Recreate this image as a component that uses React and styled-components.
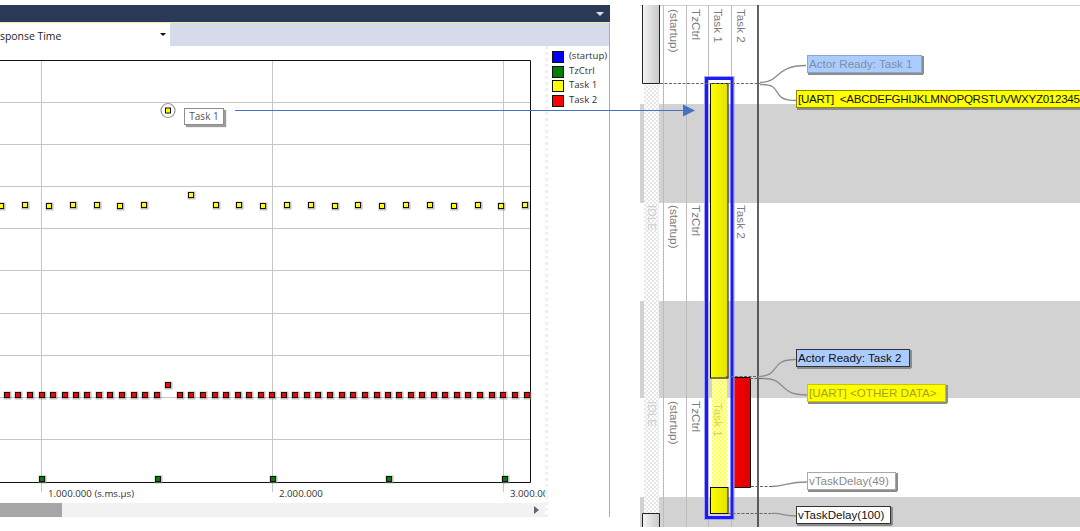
import React from "react";
import styled, { createGlobalStyle } from "styled-components";

const GlobalStyle = createGlobalStyle`
  html, body { margin: 0; padding: 0; background: #fff; }
  #root { width: 1080px; height: 531px; overflow: hidden; }
`;

const Page = styled.div`
  position: relative;
  width: 1080px;
  height: 531px;
  padding-top: 5px;
  box-sizing: border-box;
  display: flex;
  gap: 30px;
  overflow: hidden;
  background: #fff;
`;

const ChartPanel = styled.section`
  width: 610px;
  height: 512px;
  display: flex;
  flex-direction: column;
  flex: none;
`;

const TitleBar = styled.div`
  height: 17px;
  flex: none;
  background: #2a3a56;
  border-bottom: 1px solid #f1e9a2;
  display: flex;
  align-items: center;
  justify-content: flex-end;
  padding-right: 6px;
`;

const Chevron = styled.span`
  width: 0;
  height: 0;
  border-left: 4px solid transparent;
  border-right: 4px solid transparent;
  border-top: 4px solid #d8dde8;
`;

const PanelBody = styled.div`
  flex: 1;
  display: flex;
  flex-direction: column;
  border-right: 1px solid #a2aac6;
  min-height: 0;
`;

const Toolbar = styled.div`
  height: 23px;
  flex: none;
  background: #d6dbe9;
  display: flex;
`;

const Combo = styled.div`
  width: 170px;
  background: #fff;
  display: flex;
  align-items: center;
  justify-content: space-between;
  padding: 2px 4px 0 0;
  box-sizing: border-box;
  font: 10.4px "Open Sans", "Noto Sans", sans-serif;
  color: #222;
  white-space: nowrap;
`;

const ComboArrow = styled.span`
  width: 0;
  height: 0;
  margin-top: -2px;
  border-left: 3px solid transparent;
  border-right: 3px solid transparent;
  border-top: 3px solid #111;
`;

const ChartRow = styled.div`
  flex: 1;
  display: flex;
  min-height: 0;
`;

const ChartColumn = styled.div`
  width: 545px;
  flex: none;
  display: flex;
  flex-direction: column;
`;

const ChartArea = styled.div`
  position: relative;
  height: 457px;
  flex: none;
  svg { display: block; }
`;

const Tip = styled.div`
  position: absolute;
  left: 184px;
  top: 62px;
  width: 40px;
  height: 17px;
  box-sizing: border-box;
  background: #fff;
  border: 1px solid #8f8f8f;
  box-shadow: 2px 2px 1px #9c9c9c;
  font: 10px "Open Sans", "Noto Sans", sans-serif;
  line-height: 15px;
  text-align: center;
  color: #555;
`;

const Scrollbar = styled.div`
  height: 14px;
  flex: none;
  background: #f2f2f2;
  display: flex;
  align-items: center;
  justify-content: space-between;
  padding-right: 6px;
  box-sizing: border-box;
`;

const ScrollThumb = styled.span`
  width: 62px;
  height: 100%;
  background: #a6a6a6;
`;

const ScrollArrow = styled.span`
  width: 0;
  height: 0;
  border-top: 4px solid transparent;
  border-bottom: 4px solid transparent;
  border-left: 5px solid #626870;
`;

const LegendColumn = styled.aside`
  flex: 1;
  border-left: 3px dotted #f0f0f0;
  padding: 4px 0 0 4px;
  display: grid;
  grid-auto-rows: 14.6px;
  align-content: start;
`;

const LegendItem = styled.div`
  display: flex;
  align-items: center;
  gap: 5px;
`;

const LegendLabel = styled.span`
  font: 9.6px "Open Sans", "Noto Sans", sans-serif;
  line-height: 12px;
  margin-top: -2px;
  color: #333;
`;

const Swatch = styled.span`
  width: 12px;
  height: 12px;
  box-sizing: border-box;
  border: 1px solid #111;
  background: ${(p) => p.$color};
`;

const TracePanel = styled.section`
  position: relative;
  width: 440px;
  height: 522px;
  flex: none;
  svg { display: block; }
`;

const Callout = styled.div`
  position: absolute;
  left: ${(p) => p.$x}px;
  top: ${(p) => p.$y}px;
  width: ${(p) => p.$w}px;
  height: ${(p) => p.$h}px;
  box-sizing: border-box;
  padding-left: 1px;
  background: ${(p) => p.$bg};
  color: ${(p) => p.$fg};
  border: 1px solid ${(p) => p.$edge};
  box-shadow: 1px 2px 0 #8c8c8c, 2px 1px 0 #8c8c8c;
  font: 11.6px "Liberation Sans", Arial, sans-serif;
  letter-spacing: ${(p) => p.$track || 0}px;
  line-height: ${(p) => p.$h - 2}px;
  white-space: pre;
  overflow: hidden;
`;

const ArrowOverlay = styled.svg`
  position: absolute;
  left: 0;
  top: 0;
  pointer-events: none;
`;

const AxisText = styled.text`
  font: 9.7px "Open Sans", "Noto Sans", sans-serif;
  fill: #333;
`;

const LaneText = styled.text`
  font: 11.7px "Liberation Sans", Arial, sans-serif;
  fill: ${(p) => p.$fill || "#7c7c7c"};
`;

const yellowXs = [1, 25, 49, 73, 97, 120, 144, 191, 216, 239, 263, 287, 311, 335, 358, 382, 406, 430, 454, 478, 501, 525];
const yellowYs = [206, 205, 206, 205, 205, 206, 205, 195, 205, 205, 206, 205, 205, 206, 205, 206, 205, 205, 206, 205, 206, 205];
const redXs = [7, 18, 30, 42, 53, 65, 76, 87, 99, 110, 122, 134, 145, 157, 168, 180, 191, 203, 215, 226, 238, 249, 261, 272, 284, 295, 307, 318, 330, 342, 353, 365, 377, 388, 399, 411, 422, 434, 445, 457, 468, 480, 492, 503, 515, 527];
const greenXs = [42, 158, 273, 389, 505];
const gridY = [102, 144, 186, 228, 270, 313, 355, 397, 439];
const gridX = [41, 272, 503];

const Dot = ({ x, y, fill }) => (
  <g>
    <rect x={x - 3.5} y={y - 3.5} width="8" height="8" fill="#8a8a8a" opacity="0.55" />
    <rect x={x - 2.5} y={y - 2.5} width="5" height="5" fill={fill} stroke="#111" />
  </g>
);

const Chart = () => (
  <svg width="545" height="457" viewBox="0 46 545 457">
    {gridY.map((y) => (
      <line key={y} x1="0" x2="530" y1={y + 0.5} y2={y + 0.5} stroke="#c6c6c6" />
    ))}
    {gridX.map((x) => (
      <line key={x} x1={x + 0.5} x2={x + 0.5} y1="60" y2="492" stroke="#c6c6c6" />
    ))}
    <path d="M0 60.5H530.5V482.5H0" fill="none" stroke="#111" />
    {yellowXs.map((x, i) => (
      <Dot key={x} x={x} y={yellowYs[i]} fill="#ffff00" />
    ))}
    {redXs.map((x) => (
      <Dot key={x} x={x} y={x === 168 ? 385 : 395} fill="#ff0000" />
    ))}
    {greenXs.map((x) => (
      <Dot key={x} x={x} y={479} fill="#008000" />
    ))}
    <circle cx="168" cy="110.5" r="7" fill="#fff" stroke="#9a9a9a" strokeWidth="1.2" />
    <rect x="165.5" y="108" width="5" height="5" fill="#ffff00" stroke="#111" />
    <AxisText x="48" y="497">1.000.000 (s.ms.µs)</AxisText>
    <AxisText x="279" y="497">2.000.000</AxisText>
    <AxisText x="510" y="497">3.000.000</AxisText>
  </svg>
);

const Lane = ({ x, y, fill, children }) => (
  <LaneText $fill={fill} transform={`translate(${x} ${y}) rotate(90)`}>
    {children}
  </LaneText>
);

const Trace = () => (
  <svg width="440" height="522" viewBox="640 5 440 522">
    <defs>
      <pattern id="idleHatch" width="4" height="4" patternUnits="userSpaceOnUse">
        <rect width="4" height="4" fill="#fff" />
        <rect width="2" height="2" fill="#e6e6e6" />
        <rect x="2" y="2" width="2" height="2" fill="#e6e6e6" />
      </pattern>
      <pattern id="taskHatch" width="4" height="4" patternUnits="userSpaceOnUse">
        <rect width="4" height="4" fill="#ffffc4" />
        <rect width="2" height="2" fill="#ffff50" />
        <rect x="2" y="2" width="2" height="2" fill="#ffff50" />
      </pattern>
      <linearGradient id="barYellow" x1="0" x2="1" y1="0" y2="0">
        <stop offset="0" stopColor="#ffff00" />
        <stop offset="1" stopColor="#e2e200" />
      </linearGradient>
      <linearGradient id="barGrey" x1="0" x2="1" y1="0" y2="0">
        <stop offset="0" stopColor="#f4f4f4" />
        <stop offset="1" stopColor="#c8c8c8" />
      </linearGradient>
      <linearGradient id="barRed" x1="0" x2="1" y1="0" y2="0">
        <stop offset="0" stopColor="#f60000" />
        <stop offset="1" stopColor="#e00000" />
      </linearGradient>
    </defs>

    <line x1="640" x2="1080" y1="5.5" y2="5.5" stroke="#cfcfcf" />
    <rect x="639" y="104" width="441" height="99" fill="#d2d2d2" />
    <rect x="639" y="301" width="441" height="97" fill="#d2d2d2" />
    <rect x="639" y="497" width="441" height="30" fill="#d2d2d2" />

    <rect x="644" y="85" width="15" height="442" fill="url(#idleHatch)" />

    {[663, 686, 708, 731].map((x) => (
      <line key={x} x1={x + 0.5} x2={x + 0.5} y1="5" y2="527" stroke="#bcbcbc" />
    ))}
    <line x1="758" x2="758" y1="5" y2="527" stroke="#3a3a3a" strokeWidth="1.6" />

    <path d="M642.5 5V83.5H659.5V5" fill="url(#barGrey)" stroke="#222" />
    <path d="M642.5 527V513.5H659.5V527" fill="url(#barGrey)" stroke="#222" />

    <Lane x="670" y="9">(startup)</Lane>
    <Lane x="692" y="9">TzCtrl</Lane>
    <Lane x="714" y="9">Task 1</Lane>
    <Lane x="737" y="9">Task 2</Lane>

    <Lane x="648" y="205" fill="#d0d0d0">IDLE</Lane>
    <Lane x="670" y="205">(startup)</Lane>
    <Lane x="692" y="205">TzCtrl</Lane>
    <Lane x="737" y="205">Task 2</Lane>

    <Lane x="648" y="401" fill="#d0d0d0">IDLE</Lane>
    <Lane x="670" y="401">(startup)</Lane>
    <Lane x="692" y="401">TzCtrl</Lane>

    <rect x="712" y="379" width="15" height="108" fill="url(#taskHatch)" />
    <Lane x="714" y="403" fill="#d4d458">Task 1</Lane>

    <rect x="710.5" y="83.5" width="17.5" height="294.5" fill="url(#barYellow)" stroke="#111" />
    <rect x="710.5" y="487.5" width="17.5" height="26" fill="url(#barYellow)" stroke="#111" />
    <path d="M734 377.5H750.5V487.5H734" fill="url(#barRed)" stroke="#111" />

    <rect x="704.5" y="76.5" width="29.5" height="443" fill="none" stroke="#a4a4ff" />
    <rect x="706.5" y="78.5" width="25.5" height="439" fill="none" stroke="#1c1cf4" strokeWidth="3" />

    <g fill="none" stroke="#8c8c8c" strokeWidth="1">
      <path d="M660 83.5H760" strokeDasharray="3 1.5" stroke="#666" />
      <path d="M760 82.5C782 82 774 65.5 806 65.5" strokeWidth="1.3" />
      <path d="M760 84.5C786 84 768 100.5 796 100.5" strokeWidth="1.3" />
      <path d="M726 376.5H758" strokeDasharray="3 1.5" stroke="#666" />
      <path d="M758 376.5C782 376 768 359.5 796 359.5" strokeWidth="1.3" />
      <path d="M750 378.5H762" strokeDasharray="3 1.5" stroke="#666" />
      <path d="M762 378.5C788 378 776 395 807 395" strokeWidth="1.3" />
      <path d="M751 486.5H772" strokeDasharray="3 1.5" stroke="#666" />
      <path d="M772 486.5C786 486 788 482 807 482" strokeWidth="1.3" />
      <path d="M728 513.5H772" strokeDasharray="3 1.5" stroke="#666" />
      <path d="M772 513.5C784 513 782 516 796 516" strokeWidth="1.3" />
    </g>
  </svg>
);

const callouts = [
  { x: 167, y: 50, w: 115, h: 18, bg: "#aaccff", fg: "#7f8ea6", edge: "#8fa6c8", text: "Actor Ready: Task 1" },
  { x: 156, y: 85, w: 300, h: 18, bg: "#ffff00", fg: "#111", edge: "#8c8c00", track: -0.3, text: "[UART]  <ABCDEFGHIJKLMNOPQRSTUVWXYZ012345" },
  { x: 156, y: 344, w: 114, h: 18, bg: "#aaccff", fg: "#111", edge: "#333", text: "Actor Ready: Task 2" },
  { x: 167, y: 379, w: 139, h: 18, bg: "#ffff00", fg: "#a3a31c", edge: "#c8c800", text: "[UART] <OTHER DATA>" },
  { x: 167, y: 467, w: 89, h: 18, bg: "#fff", fg: "#8a8a8a", edge: "#a8a8a8", text: "vTaskDelay(49)" },
  { x: 156, y: 501, w: 95, h: 18, bg: "#fff", fg: "#111", edge: "#333", text: "vTaskDelay(100)" },
];

const legend = [
  ["(startup)", "#0000ff"],
  ["TzCtrl", "#008000"],
  ["Task 1", "#ffff00"],
  ["Task 2", "#ff0000"],
];

export default function App() {
  return (
    <Page>
      <GlobalStyle />
      <ChartPanel>
        <TitleBar>
          <Chevron />
        </TitleBar>
        <PanelBody>
          <Toolbar>
            <Combo>
              sponse Time
              <ComboArrow />
            </Combo>
          </Toolbar>
          <ChartRow>
            <ChartColumn>
              <ChartArea>
                <Chart />
                <Tip>Task 1</Tip>
              </ChartArea>
              <Scrollbar>
                <ScrollThumb />
                <ScrollArrow />
              </Scrollbar>
            </ChartColumn>
            <LegendColumn>
              {legend.map(([name, color]) => (
                <LegendItem key={name}>
                  <Swatch $color={color} />
                  <LegendLabel>{name}</LegendLabel>
                </LegendItem>
              ))}
            </LegendColumn>
          </ChartRow>
        </PanelBody>
      </ChartPanel>
      <TracePanel>
        <Trace />
        {callouts.map((c) => (
          <Callout key={c.text} $x={c.x} $y={c.y} $w={c.w} $h={c.h} $bg={c.bg} $fg={c.fg} $edge={c.edge} $track={c.track}>
            {c.text}
          </Callout>
        ))}
      </TracePanel>
      <ArrowOverlay width="1080" height="531" viewBox="0 0 1080 531">
        <line x1="235" x2="685" y1="110.5" y2="110.5" stroke="#4472c4" strokeWidth="1" />
        <path d="M683 104.5L695 110.5L683 116.5Z" fill="#4472c4" />
      </ArrowOverlay>
    </Page>
  );
}
